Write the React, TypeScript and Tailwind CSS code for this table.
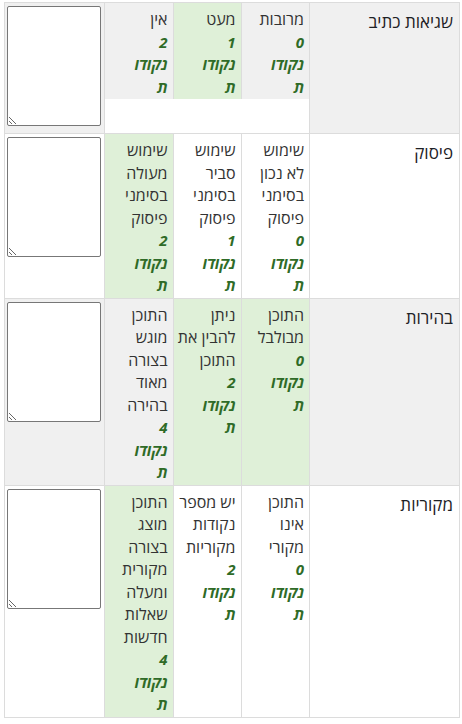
import React from 'react';

type Level = { text: string; score: number; selected?: boolean };
type Criterion = { title: string; levels: Level[] };

const criteria: Criterion[] = [
  {
    title: 'שגיאות כתיב',
    levels: [
      { text: 'מרובות', score: 0 },
      { text: 'מעט', score: 1, selected: true },
      { text: 'אין', score: 2 },
    ],
  },
  {
    title: 'פיסוק',
    levels: [
      { text: 'שימוש לא נכון בסימני פיסוק', score: 0 },
      { text: 'שימוש סביר בסימני פיסוק', score: 1 },
      { text: 'שימוש מעולה בסימני פיסוק', score: 2, selected: true },
    ],
  },
  {
    title: 'בהירות',
    levels: [
      { text: 'התוכן מבולבל', score: 0, selected: true },
      { text: 'ניתן להבין את התוכן', score: 2, selected: true },
      { text: 'התוכן מוגש בצורה מאוד בהירה', score: 4 },
    ],
  },
  {
    title: 'מקוריות',
    levels: [
      { text: 'התוכן אינו מקורי', score: 0 },
      { text: 'יש מספר נקודות מקוריות', score: 2 },
      { text: 'התוכן מוצג בצורה מקורית ומעלה שאלות חדשות', score: 4, selected: true },
    ],
  },
];

export default function App() {
  return (
    <div
      dir="rtl"
      className="bg-white min-h-screen pt-[2px] px-[2px] text-[#333] text-[16px] leading-[22.5px]"
      style={{ fontFamily: '"Open Sans", "Liberation Sans", sans-serif' }}
    >
      <table className="border-collapse table-fixed w-[455px] mr-0 ml-auto">
        <colgroup>
          <col className="w-[150px]" />
          <col className="w-[205px]" />
          <col className="w-[100px]" />
        </colgroup>
        <tbody>
          {criteria.map((c, i) => {
            const odd = i % 2 === 0;
            return (
              <tr key={c.title}>
                {/* criterion description */}
                <td
                  className={`border border-[#dcdcdc] align-top pt-[8px] pr-[6px] text-[17px] text-[#1d2125] ${
                    odd ? 'bg-[#f0f0f0]' : 'bg-white'
                  }`}
                >
                  {c.title}
                </td>

                {/* levels */}
                <td className="border border-[#dcdcdc] align-top p-0 bg-white">
                  <table className="border-collapse table-fixed w-full">
                    <tbody>
                      <tr>
                        {c.levels.map((l, j) => (
                          <td
                            key={j}
                            className={`align-top pt-[5px] pb-[1px] pr-[5px] pl-[3px] ${
                              j < c.levels.length - 1 ? 'border-l border-[#dcdcdc]' : ''
                            } ${
                              l.selected ? 'bg-[#dff0d8]' : odd ? 'bg-[#f0f0f0]' : 'bg-white'
                            }`}
                          >
                            <div>{l.text}</div>
                            <div className="w-[36px] font-bold italic text-[#2f6b27] text-[15px] [overflow-wrap:anywhere]">
                              {l.score} נקודות
                            </div>
                          </td>
                        ))}
                      </tr>
                    </tbody>
                  </table>
                </td>

                {/* remark */}
                <td
                  className={`border border-[#dcdcdc] align-top pt-[3px] pb-[7px] pr-[3px] pl-[4px] ${
                    odd ? 'bg-[#f0f0f0]' : 'bg-white'
                  }`}
                >
                  <textarea
                    className="block w-[94px] h-[120px] bg-white border border-[#777] rounded-[2px] resize-y"
                    aria-label="הערה"
                  />
                </td>
              </tr>
            );
          })}
        </tbody>
      </table>
    </div>
  );
}
